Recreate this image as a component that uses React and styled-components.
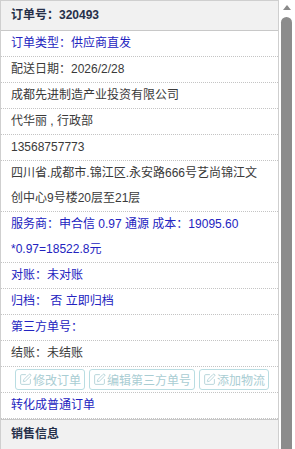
import React from "react";
import styled, { createGlobalStyle } from "styled-components";
import { SquarePen } from "lucide-react";

const Global = createGlobalStyle`
  html, body { margin: 0; padding: 0; background: #fff; }
  body { font-family: "Liberation Sans", "Noto Sans CJK SC", sans-serif; font-size: 12px; overflow: hidden; }
`;

const Page = styled.div`
  width: 279px;
  box-sizing: border-box;
  border-left: 1px solid #cfcfcf;
  border-right: 1px solid #cfcfcf;
  border-top: 1px solid #cfcfcf;
  background: #fff;
`;

const Header = styled.div`
  background: #f1f1f1;
  font-weight: bold;
  color: #26304a;
  padding: 0 10px;
  line-height: 29px;
  border-bottom: 1px solid #c8c8c8;
  border-top: ${(p) => (p.$topLine ? "1px solid #c8c8c8" : "none")};
  height: ${(p) => (p.$tall ? "40px" : "auto")};
`;

const Row = styled.div`
  padding: 0 10px;
  line-height: 25px;
  border-bottom: 1px dotted #c4c4c4;
  color: ${(p) => (p.$blue ? "#2323c0" : "#3a3a3a")};
`;

const ButtonRow = styled.div`
  display: flex;
  gap: 4px;
  padding: 2px 10px 2px 14px;
  border-bottom: 1px dotted #c4c4c4;
`;

const Btn = styled.span`
  display: inline-flex;
  align-items: center;
  gap: 1px;
  height: 21px;
  box-sizing: border-box;
  padding: 0 3px;
  border: 1px solid #b9dde2;
  border-radius: 3px;
  color: #a9cdd3;
  font-size: 12px;
  white-space: nowrap;
`;

const ScrollBar = styled.div`
  position: fixed;
  top: 0;
  right: 0;
  width: 16px;
  height: 100vh;
  background: #fff;
`;

const Arrow = styled.div`
  position: absolute;
  top: 5px;
  left: 4px;
  width: 0;
  height: 0;
  border-left: 4px solid transparent;
  border-right: 4px solid transparent;
  border-bottom: 5px solid #8a8a8a;
`;

const Thumb = styled.div`
  position: absolute;
  top: 17px;
  left: 2px;
  width: 11px;
  bottom: 0;
  background: #8c8c8c;
  border-radius: 6px 6px 0 0;
`;

export default function App() {
  return (
    <>
      <Global />
      <Page>
        <Header>订单号：320493</Header>
        <Row $blue>订单类型：供应商直发</Row>
        <Row>配送日期：2026/2/28</Row>
        <Row>成都先进制造产业投资有限公司</Row>
        <Row>代华丽 , 行政部</Row>
        <Row>13568757773</Row>
        <Row>四川省.成都市.锦江区.永安路666号艺尚锦江文创中心9号楼20层至21层</Row>
        <Row $blue>
          服务商：申合信 0.97 通源 成本：19095.60<wbr />*0.97=18522.8元
        </Row>
        <Row $blue>对账：未对账</Row>
        <Row $blue>归档：&nbsp;否 立即归档</Row>
        <Row $blue>第三方单号：</Row>
        <Row>结账：未结账</Row>
        <ButtonRow>
          <Btn><SquarePen size={13} strokeWidth={1.5} />修改订单</Btn>
          <Btn><SquarePen size={13} strokeWidth={1.5} />编辑第三方单号</Btn>
          <Btn><SquarePen size={13} strokeWidth={1.5} />添加物流</Btn>
        </ButtonRow>
        <Row $blue>转化成普通订单</Row>
        <Header $topLine $tall>销售信息</Header>
      </Page>
      <ScrollBar>
        <Arrow />
        <Thumb />
      </ScrollBar>
    </>
  );
}
